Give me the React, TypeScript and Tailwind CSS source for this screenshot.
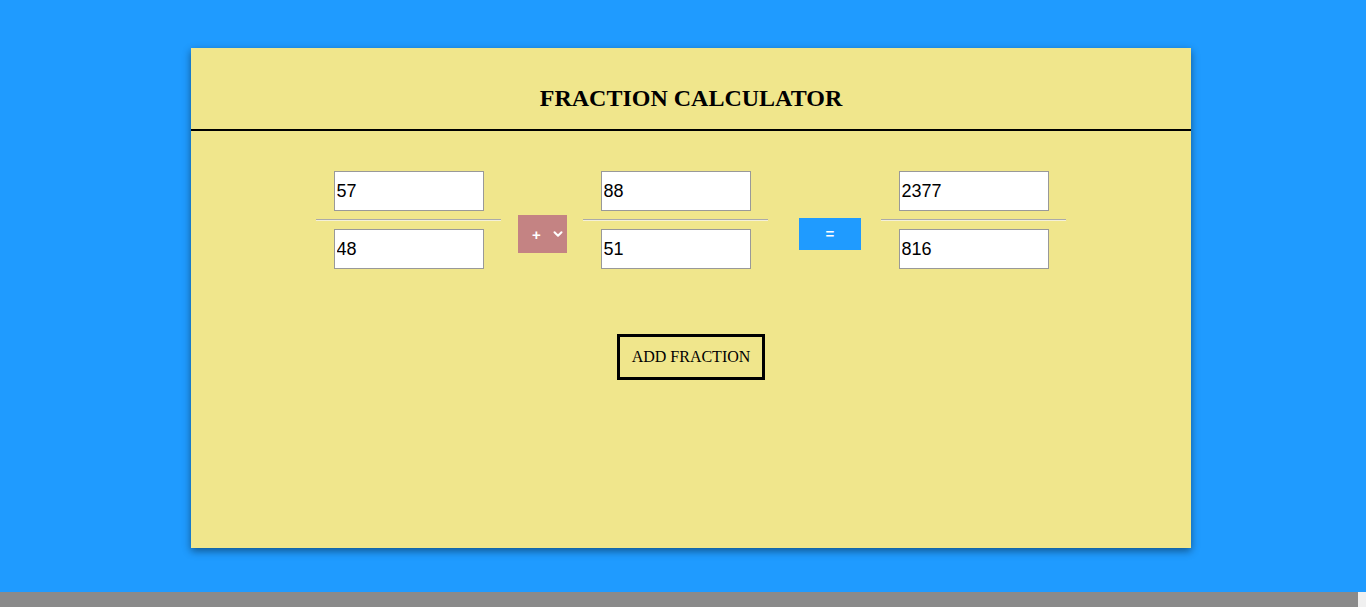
import { ChevronDown } from 'lucide-react';

interface FractionProps {
  top: string;
  bottom: string;
}

function Fraction({ top, bottom }: FractionProps) {
  return (
    <div className="flex w-[185px] flex-col items-center">
      <input
        type="text"
        defaultValue={top}
        className="h-10 w-[150px] border border-[#999] bg-white px-[2px] text-[18px] text-black outline-none [font-family:'Liberation_Sans',Arial,sans-serif]"
      />
      <div className="my-2 h-[2px] w-full border-t border-b border-t-[#aaa] border-b-[#f4f0d8]" />
      <input
        type="text"
        defaultValue={bottom}
        className="h-10 w-[150px] border border-[#999] bg-white px-[2px] text-[18px] text-black outline-none [font-family:'Liberation_Sans',Arial,sans-serif]"
      />
    </div>
  );
}

export default function App() {
  return (
    <div className="flex h-[607px] w-full flex-col overflow-hidden bg-[#1f9bff]">
      <div className="flex flex-1 justify-center pl-4 pt-12">
        <div className="h-[500px] w-[1000px] bg-[#f0e68c] shadow-[0_3px_8px_rgba(0,0,0,0.45)] [font-family:'Liberation_Serif','Times_New_Roman',serif]">
          {/* Header */}
          <div className="flex h-[83px] items-center justify-center border-b-2 border-black pt-[19px]">
            <h1 className="text-[24px] font-bold text-black">FRACTION CALCULATOR</h1>
          </div>

          {/* Fractions row */}
          <div className="mt-10 flex justify-center">
            <Fraction top="57" bottom="48" />
            <div className="ml-[17px] mt-[44px] flex h-[38px] w-[49px] items-center bg-[#c48383] pl-[14px] text-white [font-family:'Liberation_Sans',Arial,sans-serif]">
              <span className="text-[15px] font-bold leading-none">+</span>
              <ChevronDown className="ml-[10px] h-[14px] w-[14px]" strokeWidth={3.5} />
            </div>
            <div className="ml-4">
              <Fraction top="88" bottom="51" />
            </div>
            <button className="ml-[31px] mt-[47px] h-8 w-[62px] bg-[#1f9bff] text-[15px] font-bold text-white [font-family:'Liberation_Sans',Arial,sans-serif]">
              =
            </button>
            <div className="ml-5">
              <Fraction top="2377" bottom="816" />
            </div>
          </div>

          {/* Action */}
          <div className="mt-[65px] flex justify-center">
            <button className="h-[46px] w-[148px] border-[3px] border-black text-[16px] text-black">
              ADD FRACTION
            </button>
          </div>
        </div>
      </div>
      <div className="flex h-[15px]">
        <div className="flex-1 bg-[#8a8a8a]" />
        <div className="w-2 bg-[#f0f0f0]" />
      </div>
    </div>
  );
}
